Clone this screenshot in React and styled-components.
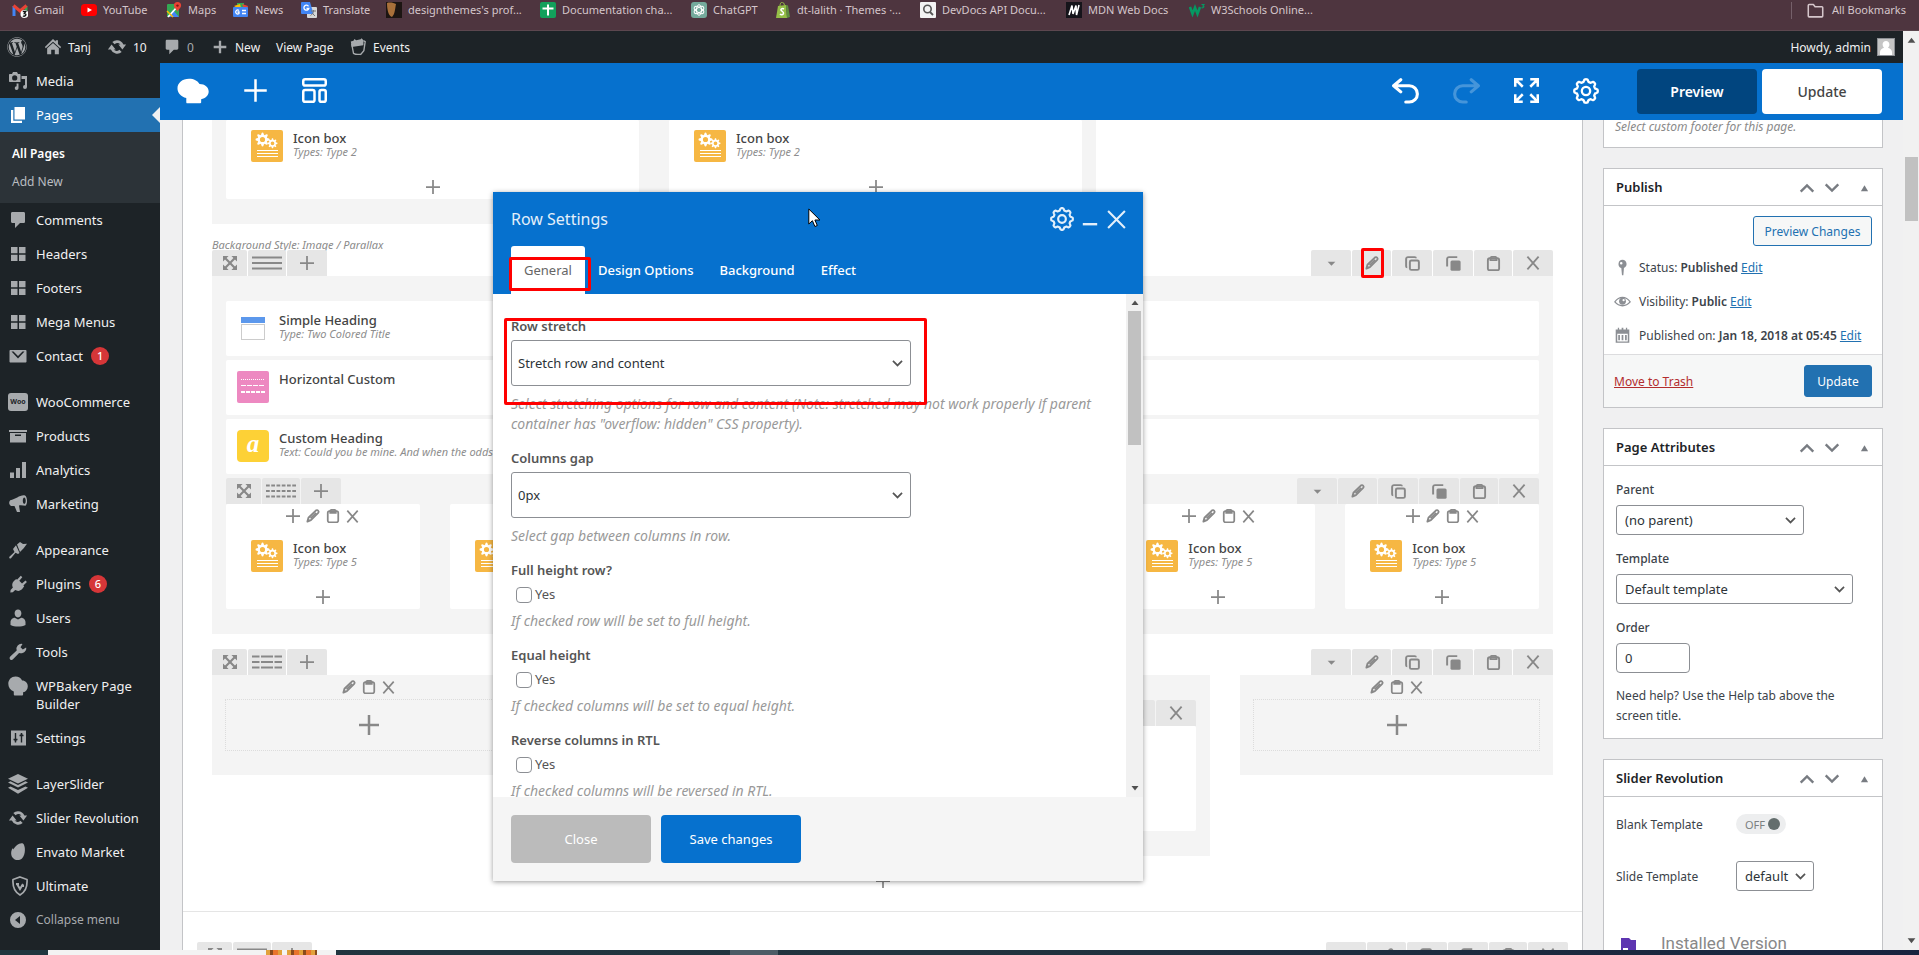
import React from 'react';
import styled, { createGlobalStyle, css } from 'styled-components';
import { FaWordpress } from 'react-icons/fa';

const blue = '#0671ce';
const wpBlue = '#2271b1';
const uiFont = '"Noto Sans", "Open Sans", sans-serif';

const GlobalStyle = createGlobalStyle`
  * { box-sizing: border-box; }
  body { margin: 0; font-family: ${uiFont}; font-size: 12px; color: #3c434a; overflow: hidden; }
  button, input, select { font: inherit; color: inherit; margin: 0; }
  button { border: 0; background: none; padding: 0; cursor: pointer; }
  a { color: inherit; text-decoration: none; }
  ul, p, h1, h2, h3 { margin: 0; padding: 0; font-weight: inherit; font-size: inherit; }
  ul { list-style: none; }
  svg { display: block; flex: none; }
`;

/* ---------- icons, drawn on a 20 unit grid ---------- */

const gearPath = (() => {
  const points = [];
  for (let i = 0; i < 96; i += 1) {
    const a = (i / 96) * Math.PI * 2;
    const r = 8.1 + 0.95 * Math.tanh(2.4 * Math.cos(8 * a));
    points.push(`${(10 + r * Math.sin(a)).toFixed(2)} ${(10 - r * Math.cos(a)).toFixed(2)}`);
  }
  return `M${points.join('L')}Z`;
})();

const cog = (cx, cy, r) => {
  const points = [];
  for (let i = 0; i < 64; i += 1) {
    const a = (i / 64) * Math.PI * 2;
    const q = r * (0.87 + 0.15 * Math.tanh(3 * Math.cos(8 * a)));
    points.push(`${(cx + q * Math.sin(a)).toFixed(2)} ${(cy - q * Math.cos(a)).toFixed(2)}`);
  }
  const h = r * 0.38;
  return `M${points.join('L')}ZM${cx - h} ${cy}a${h} ${h} 0 1 0 ${2 * h} 0a${h} ${h} 0 1 0 ${-2 * h} 0Z`;
};

const line = { fill: 'none', stroke: 'currentColor', strokeWidth: 2 };

const glyphs = {
  gear: <g {...line} strokeWidth="1.800"><path d={gearPath} strokeLinejoin="round" /><circle cx="10" cy="10" r="3.2" /></g>,
  plus: <path {...line} d="M10 1v18M1 10h18" />,
  add: <path {...line} strokeWidth="2.500" d="M10 0v20M0 10h20" />,
  close: <path {...line} d="M2 2l16 16M18 2L2 18" />,
  remove: <path {...line} strokeWidth="2.600" d="M2 1l16 18M18 1L2 19" />,
  minus: <path {...line} strokeWidth="3" d="M1 16.500h18" />,
  templates: <g {...line}><rect x="1" y="1" width="18" height="5" rx="1.500" /><rect x="1" y="9.500" width="9" height="9.500" rx="1.500" /><rect x="14" y="9.500" width="5" height="9.500" rx="1.500" /></g>,
  undo: <path {...line} strokeWidth="2.300" strokeLinecap="round" strokeLinejoin="round" d="M6.500 2L1.200 6.500l5.300 4.500M1.500 6.500h11.300a5.500 5.500 0 0 1 0 12h-2.600" />,
  redo: <path {...line} strokeWidth="2.300" strokeLinecap="round" strokeLinejoin="round" d="M13.500 2l5.300 4.500-5.300 4.500M18.500 6.500H7.200a5.500 5.500 0 0 0 0 12h2.600" />,
  fullscreen: <path {...line} d="M1 7V1h6M1 1l6 6M13 1h6v6M19 1l-6 6M1 13v6h6M1 19l6-6M19 13v6h-6M19 19l-6-6" />,
  bun: <path fill="currentColor" d="M7.500.5C3.400.5.3 3.700.3 7.800c0 3.700 2 6.300 5.500 7.600v3.200c0 .6.400.9.900.9h7.500c.6 0 .9-.4.900-.9v-2.300c2.700-.6 4.700-2.900 4.700-5.900 0-3.300-2.400-5.800-5.700-5.800C13 2 10.500.5 7.500.5z" />,
  move: <g fill="currentColor"><path d="M0 0h8L0 8zM20 0v8l-8-8zM0 20v-8l8 8zM20 20h-8l8-8z" /><path stroke="currentColor" strokeWidth="3" d="M3 3l14 14M17 3L3 17" /></g>,
  caret: <path fill="currentColor" d="M3 7h14l-7 7z" />,
  pencil: <g fill="none" stroke="currentColor" strokeWidth="2.600" strokeLinejoin="round"><path d="M2 18l1.500-5.500L14 2.200c1.200-1 3-.6 3.600.6.700 1 .500 2-.2 2.800L7 16z" /><path d="M6.500 13.500L14.500 5.500M3 15l2 2" /></g>,
  copy: <g {...line} strokeWidth="2.600"><rect x="6.500" y="6" width="12" height="12.500" rx="2" /><path d="M3 15c-1 0-1.500-.6-1.500-1.500V4A2.500 2.500 0 0 1 4 1.500h9c1 0 1.500.5 1.500 1.500" /></g>,
  clone: <g><rect x="6" y="6" width="13.500" height="13.500" rx="2" fill="currentColor" /><path {...line} strokeWidth="2.600" d="M1.500 14V4A2.500 2.500 0 0 1 4 1.500h11" /></g>,
  paste: <g {...line} strokeWidth="2.500"><rect x="2.500" y="3" width="15" height="16" rx="2.500" /><path d="M6 3.200C6 1.800 7 1.200 8 1.200h4c1 0 2 .6 2 2V5.500H6z" /></g>,
  rows1: <path {...line} strokeWidth="1.800" d="M0 4.500h20M0 10h20M0 15.500h20" />,
  rows3: <path {...line} strokeWidth="1.800" strokeDasharray="5 1 8 1 5 9" d="M0 4.500h20M0 10h20M0 15.500h20" />,
  rows6: <path {...line} strokeWidth="1.800" strokeDasharray="2.500 1" d="M0 4.500h20M0 10h20M0 15.500h20" />,
  chevronUp: <path {...line} strokeWidth="2.600" d="M3 14l7-7 7 7" />,
  chevronDown: <path {...line} strokeWidth="2.600" d="M3 6l7 7 7-7" />,
  triangle: <path fill="currentColor" d="M10 3l8 13H2z" />,
  scrollUp: <path fill="currentColor" d="M10 5l7 9H3z" />,
  scrollDown: <path fill="currentColor" d="M3 6h14l-7 9z" />,
  folder: <path {...line} strokeWidth="1.800" strokeLinejoin="round" d="M1.500 16.500V4c0-.6.400-1 1-1h5l2 2.500h8c.6 0 1 .4 1 1v10c0 .6-.4 1-1 1h-15c-.6 0-1-.4-1-1z" />,
  home: <path fill="currentColor" d="M10 1l3 3V2.500h2.500V6.600L19 10l-1 1.300L10 4.200 2 11.300 1 10zM10 5.600l6.500 5.700V18H12v-5H8v5H3.500v-6.700z" />,
  update: <path fill="currentColor" d="M10.200 3.300c2.800 0 5.200 1.600 6.200 4.200h2.700L15.400 12.500l-4-5h2A4.200 4.200 0 0 0 7.600 7.300L5.300 5a7 7 0 0 1 4.900-1.700zM4.600 7.500l4 5h-2a4.200 4.200 0 0 0 5.800.2l2.300 2.300a7 7 0 0 1-10.900-2.500H.900z" />,
  comment: <path fill="currentColor" d="M4.500 2h11c1 0 1.500.6 1.500 1.500v8c0 1-.6 1.500-1.500 1.500H12l-5 5v-5H4.500c-1 0-1.500-.6-1.500-1.500v-8c0-1 .6-1.500 1.500-1.500z" />,
  thickPlus: <path fill="currentColor" d="M17 8.700v2.600h-5.700V17H8.700v-5.700H3V8.700h5.700V3h2.600v5.700z" />,
  ticket: <g><path fill="none" stroke="currentColor" strokeWidth="1.500" d="M3 6.500L5 17c4 2.300 6 .6 8 1.300L16.500 14 18 4 16 3" /><path fill="currentColor" d="M2 4l3-1 1-2 2 1.500 5-1L14 .3l2 2.200L16 8 3 10z" /></g>,
  media: <g fill="currentColor"><path fillRule="evenodd" d="M2 3h2l1-2h4l1 2h1.500c.6 0 1 .4 1 1v7H2c-.6 0-1-.4-1-1V4c0-.6.400-1 1-1zm4.700 1.300a2.600 2.600 0 1 0 0 5.200 2.600 2.600 0 0 0 0-5.200z" /><path d="M13.500 5H19v11a2 2 0 1 1-2-2V8h-3.500zM10.500 12.500v4.700a1.900 1.900 0 1 1-1.900-2v-2.700z" /></g>,
  pages: <path fill="currentColor" d="M6.500 2H17v12.500H6.500zM3 5h2.300v10.700H14V18H3z" />,
  blocks: <path fill="currentColor" d="M3 3h6.500v6.300H3zM11 3h6.500v6.300H11zM3 10.700h6.500V17H3zM11 10.700h6.500V17H11z" />,
  mail: <path fill="currentColor" fillRule="evenodd" d="M2.500 4h15c.5 0 1 .4 1 1v10.500c0 .6-.5 1-1 1h-15c-.5 0-1-.4-1-1V5c0-.6.500-1 1-1zm1 1.500l6.500 7 6.500-7h-2L10 10 5.500 5.500z" />,
  archive: <path fill="currentColor" fillRule="evenodd" d="M1 4h18v2H1zM2 7h16v9.500H2zm5 1.500V10h6V8.500z" />,
  chart: <path fill="currentColor" d="M2 12.500h4V18H2zM8 8h4v10H8zM14 2h4v16h-4z" />,
  megaphone: <path fill="currentColor" fillRule="evenodd" d="M17 1.500c2.500 1.300 2.800 8.500.5 10.300-2.500-.3-4.500-.8-6.500-.3l1 6.500H9l-2.500-6H3c-2-1-2.500-4-.8-5.800C8 5.500 12 .500 17 1.500zm-.6 2c-2 .3-2.200 5.500-.2 6.500 2-.3 2-5.800.2-6.500z" />,
  brush: <path fill="currentColor" d="M9 4.500L12 2l3 2 4-.3-3.300 4.500L12 12zM8 5.300L11.500 13 10 14l-2.500-1.200L3 18.300c-1 .700-2.300-.5-1.600-1.600L6.500 12 5 9z" />,
  plug: <path fill="currentColor" d="M12.800 1.800l1.500 1.500-3 3.500 2.700 2.700 3.500-3 1.400 1.400-3.500 3.500.8.900-2 2.800c-1.800 2-4.700 2.300-7 1l-2.400 2.100-2.500.2.300-2.500 2.300-2.300c-1.200-2.300-.8-5 1-6.700l2.300-2 .8.800z" />,
  user: <path fill="currentColor" d="M10 1.500c2 0 3.400 1.600 3.400 3.800S12 9.500 10 9.500 6.600 7.500 6.600 5.300 8 1.500 10 1.500zM2.500 14c0-2 2-4.200 4.200-4.200L10 11.500l3.300-1.700c2.200 0 4.200 2.200 4.200 4.200v3c-4 2-11 2-15 0z" />,
  wrench: <path fill="currentColor" d="M16.700 9.800c-1.500 1.500-3.700 1.900-5.600 1.100L5 17.300c-.8.900-2 .9-2.800.1s-.8-2 .1-2.800l6.400-6.100A5 5 0 0 1 14.500 2l-2 3.200 2.300 2.300 3.300-2c.5 1.500 0 3.200-1.400 4.300z" />,
  sliders: <g><rect x="3" y="2.500" width="15" height="15" fill="currentColor" /><path d="M7.500 5v9.500M13.500 5v9.500M5.500 11.500h4M11.500 7.500h4M6.500 12.500h2M12.500 6.500h2" stroke="#1d2327" strokeWidth="1.400" /></g>,
  layers: <path fill="currentColor" d="M10 0l10 4.800L10 9.600 0 4.800zM0 8.500l2.500-1.200L10 11l7.500-3.700L20 8.500l-10 5zM0 13.700l2.500-1.200L10 16.100l7.500-3.600 2.500 1.200-10 6z" />,
  leaf: <path fill="currentColor" d="M15 1.500c2.500 2 3 11-1 15-3 2.500-7.500 2-9.500-1C2.500 13 3 8.500 4.500 6.500c.7-.3 1 .2.600 1.300C8 3 11 .8 15 1.500z" />,
  shield: <g {...line} strokeWidth="1.700"><path d="M12 1l7 2.500c.5 7-1.500 12.500-7 15.500-5.500-3-7.500-8.500-7-15.500z" /><path strokeWidth="2" d="M9 8l3 5 3-5M8 8h3M13 10h3" /></g>,
  collapse: <path fill="currentColor" fillRule="evenodd" d="M10 2a8 8 0 1 1 0 16 8 8 0 0 1 0-16zm2 4l-5 4 5 4z" />,
  pin: <path fill="currentColor" d="M10 1a5 5 0 0 1 1.700 9.600L11 19H9.400l-.8-8.300A5 5 0 0 1 10 1zM8.500 3.500A1.500 1.500 0 1 0 8.500 6.500 1.500 1.500 0 0 0 8.500 3.500z" fillRule="evenodd" />,
  eye: <g><path {...line} strokeWidth="1.500" d="M1 10.500c5-7 13-7 18 0-5 6-13 6-18 0z" /><circle cx="10" cy="9.700" r="4" fill="currentColor" /><circle cx="11.300" cy="8.400" r="1.300" fill="#fff" /></g>,
  calendar: <path fill="currentColor" fillRule="evenodd" d="M3 3h1.500V1H6v2h3V1h2v2h3V1h1.500v2H18v15.500H2V3zm.8 5v9h12.400V8zM5 9.500h2v6H5zm4 0h2v6H9zm4 0h2v6h-2z" />,
};

function Icon({ name, size = 20, width }) {
  return (
    <svg width={width || size} height={size} viewBox="0 0 20 20" preserveAspectRatio={width ? 'none' : undefined} aria-hidden="true">
      {glyphs[name]}
    </svg>
  );
}

const favicons = {
  gmail: <g fill="none" strokeWidth="3"><path stroke="#4285f4" d="M2 14V4" /><path stroke="#34a853" d="M14 9V4" /><path stroke="#ea4335" d="M1.500 3.500L8 9l6.500-5.500" /><circle cx="12.500" cy="12" r="4" fill="#fff" stroke="none" /><path stroke="#111" strokeWidth="1.300" d="M10.800 9.500h3l-1.500 2c3 0 1.500 3.500-1.500 2.500" /></g>,
  youtube: <g><rect y="2" width="16" height="12" rx="3.500" fill="#f00" /><path fill="#fff" d="M6.500 5.500L11 8l-4.500 2.500z" /></g>,
  maps: <g><rect x="1" y="2" width="12" height="13" rx="1" fill="#34a853" /><path fill="#4285f4" d="M7 8l6 7H2z" /><path stroke="#fff" strokeWidth="1.800" d="M2 15L12 4" /><path stroke="#fbbc04" strokeWidth="1.500" d="M1 9l6 6" /><path fill="#ea4335" d="M11.500 0a3.600 3.600 0 0 1 3.600 3.600c0 2.500-2.600 3.400-3.600 6.400-1-3-3.600-3.900-3.600-6.400A3.600 3.600 0 0 1 11.500 0z" /><circle cx="11.500" cy="3.600" r="1.200" fill="#7b1b13" /></g>,
  news: <g><path fill="#34a853" d="M4 1h7v8H4z" /><path fill="#ea4335" d="M9 2l6 2-2 7z" /><path fill="#fbbc04" d="M1 4l6-2 2 7z" /><rect y="5" width="15" height="10" rx="1" fill="#4285f4" /><path fill="none" stroke="#fff" strokeWidth="1.300" d="M6 8.500a2 2 0 1 0 0 3V10H4.500M9 8.500h4M9 11.500h4" /></g>,
  translate: <g><rect x="6" y="5" width="10" height="11" rx="1" fill="#d6d6d6" /><path fill="#4285f4" d="M1 0h8l3.500 12H1a1 1 0 0 1-1-1V1a1 1 0 0 1 1-1z" /><path fill="none" stroke="#fff" strokeWidth="1.300" d="M7.500 4.300a2.500 2.500 0 1 0 .3 2.200H5.500" /><path stroke="#777" d="M10 9h5M12.500 8v1c0 2-2 4-3 4.500M11 11l3 3" fill="none" /></g>,
  wood: <g><rect width="16" height="16" fill="#1c1512" /><path fill="#a8703a" d="M1 1c3-1 7 0 9 1-1 5-1 10-4 13-4-1-5-9-5-14z" /></g>,
  sheet: <g><rect width="16" height="16" rx="2" fill="#12a05b" /><path stroke="#fff" strokeWidth="2" d="M8 2.500v11M2.500 6.500h11" /></g>,
  gpt: <g><rect width="16" height="16" rx="3" fill="#74aa9c" /><g fill="none" stroke="#fff" strokeWidth="1"><ellipse cx="8" cy="8" rx="2.500" ry="5.300" /><ellipse cx="8" cy="8" rx="2.500" ry="5.300" transform="rotate(60 8 8)" /><ellipse cx="8" cy="8" rx="2.500" ry="5.300" transform="rotate(120 8 8)" /></g></g>,
  shopify: <g><path fill="#95bf47" d="M3 4l8-1 1 13H1z" /><path fill="#5e8e3e" d="M11 3l2 .5 2 11.500-3 1z" /><path fill="none" stroke="#95bf47" d="M5 4c0-5 4-5 4.500-.5" /><path fill="none" stroke="#fff" strokeWidth="1.500" d="M9 7c-2-1-3.500.2-3 1.200S9 10 8.500 11.500 6 13 5 12" /></g>,
  search: <g><rect width="16" height="16" rx="1" fill="#f3f3f3" /><circle cx="7.500" cy="7" r="3.700" fill="none" stroke="#555" strokeWidth="1.600" /><path stroke="#555" strokeWidth="1.800" d="M10 10l3 3" /></g>,
  mdn: <g><rect width="16" height="16" fill="#15141a" /><path fill="none" stroke="#fff" strokeWidth="1.600" d="M3 13L6 3.500 7 12l3-8.500.5 9.500L13 3" /></g>,
  w3: <g fill="none" stroke="#059862"><path strokeWidth="2.500" d="M1 5l2.500 7L6 5.500 8.500 12 11 5" /><path strokeWidth="1.200" d="M12.500 2.500h2.500l-1 1.500c1.500 0 1 2.300-1.500 1.700" /></g>,
};

/* ---------- browser bookmarks ---------- */

const Screen = styled.div`
  display: flex;
  flex-direction: column;
  height: 100vh;
  min-width: 1200px;
  overflow: hidden;
`;

const BookmarkBar = styled.nav`
  display: flex;
  align-items: center;
  flex: none;
  height: 31px;
  padding: 0 13px 10px 12px;
  background: #4e353f;
  border-bottom: 1px solid #5c474f;
  color: #d5c6cb;
  font-size: 11px;
`;

const Bookmark = styled.a`
  display: flex;
  align-items: center;
  gap: 6px;
  width: ${(p) => p.$width}px;
  line-height: 18px;
  white-space: nowrap;
`;

const AllBookmarks = styled.a`
  display: flex;
  align-items: center;
  gap: 8px;
  margin-left: auto;
  padding-left: 15px;
  border-left: 1px solid #75606a;
  line-height: 16px;
`;

const bookmarks = [
  ['gmail', 'Gmail', 69], ['youtube', 'YouTube', 85], ['maps', 'Maps', 67], ['news', 'News', 68],
  ['translate', 'Translate', 85], ['wood', "designthemes's prof...", 154], ['sheet', 'Documentation cha...', 151],
  ['gpt', 'ChatGPT', 84], ['shopify', 'dt-lalith · Themes ·...', 145], ['search', 'DevDocs API Docu...', 146],
  ['mdn', 'MDN Web Docs', 123], ['w3', 'W3Schools Online...', 128],
];

/* ---------- WordPress admin bar ---------- */

const Window = styled.div`
  display: flex;
  flex: 1;
  min-height: 0;
`;

const Page = styled.div`
  display: flex;
  flex-direction: column;
  flex: 1;
  min-width: 0;
`;

const AdminBar = styled.header`
  display: flex;
  align-items: center;
  flex: none;
  height: 32px;
  padding: 0 8px 0 4px;
  background: #1d2327;
  color: #f0f0f1;
  font-size: 12px;
`;

const AdminItem = styled.a`
  display: flex;
  align-items: center;
  gap: 6px;
  width: ${(p) => p.$width}px;
  padding-left: 3px;
  white-space: nowrap;
  color: ${(p) => (p.$dim ? '#a7aaad' : 'inherit')};
  svg { color: #a7aaad; }
`;

const Account = styled.a`
  display: flex;
  align-items: center;
  gap: 6px;
  margin-left: auto;
`;

/* ---------- left menu ---------- */

const Columns = styled.div`
  display: flex;
  flex: 1;
  min-height: 0;
`;

const Menu = styled.nav`
  flex: none;
  width: 160px;
  padding-top: 1px;
  background: #1d2327;
  color: #f0f0f1;
  overflow: hidden;
`;

const MenuItem = styled.a`
  position: relative;
  display: flex;
  align-items: flex-start;
  gap: 8px;
  min-height: 34px;
  padding: 8px;
  font-size: ${(p) => (p.$dim ? 12 : 13)}px;
  line-height: 18px;
  color: ${(p) => (p.$dim ? '#a7aaad' : 'inherit')};
  svg { color: #a7aaad; margin-top: -1px; margin-bottom: -1px; }
  ${(p) => p.$active && css`
    background: ${wpBlue};
    color: #fff;
    svg { color: #fff; }
    &::after {
      content: '';
      position: absolute;
      right: 0;
      top: 9px;
      border: 8px solid transparent;
      border-right-color: #f0f0f1;
      border-left: 0;
    }
  `}
`;

const MenuGap = styled.div`
  height: 12px;
`;

const SubMenu = styled.div`
  display: flex;
  flex-direction: column;
  padding: 8px 12px 7px;
  background: #2c3338;
  line-height: 28px;
`;

const SubLink = styled.a`
  color: ${(p) => (p.$current ? '#fff' : '#b9bdc1')};
  font-weight: ${(p) => (p.$current ? 600 : 400)};
`;

const Count = styled.span`
  width: 18px;
  height: 18px;
  border-radius: 9px;
  background: #d63638;
  color: #fff;
  font-size: 11px;
  font-weight: 500;
  text-align: center;
`;

const WooBadge = styled.span`
  width: 20px;
  height: 18px;
  border-radius: 3px;
  background: #a7aaad;
  color: #1d2327;
  font-size: 7px;
  font-weight: 700;
  line-height: 18px;
  text-align: center;
`;

/* ---------- builder toolbar ---------- */

const Main = styled.main`
  position: relative;
  display: flex;
  flex-direction: column;
  flex: 1;
  min-width: 0;
  background: #f0f0f1;
`;

const Toolbar = styled.div`
  display: flex;
  align-items: center;
  justify-content: space-between;
  flex: none;
  height: 57px;
  padding: 0 21px 2px 17px;
  background: ${blue};
  color: #fff;
`;

const ToolGroup = styled.div`
  display: flex;
  align-items: center;
  gap: 34px;
`;

const ToolButton = styled.button`
  display: block;
  opacity: ${(p) => (p.disabled ? 0.25 : 1)};
`;

const Actions = styled.div`
  display: flex;
  gap: 5px;
  margin: 2px 0 0 4px;
`;

const ActionButton = styled.button`
  width: 120px;
  height: 45px;
  border-radius: 4px;
  background: ${(p) => (p.$dark ? '#01457f' : '#fff')};
  color: ${(p) => (p.$dark ? '#fff' : '#444')};
  font-size: 14px;
  font-weight: ${(p) => (p.$dark ? 600 : 500)};
`;

/* ---------- editor ---------- */

const Workspace = styled.div`
  display: flex;
  gap: 20px;
  flex: 1;
  min-height: 0;
  padding: 0 20px 0 22px;
  overflow: hidden;
`;

const Editor = styled.section`
  flex: 1;
  min-width: 0;
  border: solid #c3c4c7;
  border-width: 0 1px;
  background: #fff;
  color: #444;
`;

const Rows = styled.div`
  padding: 0 29px 18px;
`;

const NextRows = styled.div`
  padding: 30px 14px 0;
  border-top: 1px solid #e5e5e5;
`;

const RowNote = styled.p`
  height: 14px;
  margin-top: 12px;
  color: #8a8a8a;
  font-size: 11px;
  font-style: italic;
  line-height: 18px;
`;

const Controls = styled.div`
  display: flex;
  gap: 1px;
  height: 26px;
  margin-top: ${(p) => p.$top || 0}px;
`;

const Control = styled.button`
  position: relative;
  display: flex;
  align-items: center;
  justify-content: center;
  width: ${(p) => p.$width || 40}px;
  margin-left: ${(p) => (p.$push ? 'auto' : 0)};
  border-radius: 2px 2px 0 0;
  background: #e6e6e6;
  color: #888;
`;

const Shade = styled.div`
  padding: ${(p) => p.$pad || '25px 14px'};
  background: #f4f4f4;
`;

const Grid = styled.div`
  display: grid;
  grid-template-columns: ${(p) => p.$columns};
  gap: 30px;
  align-items: start;
`;

const Stack = styled.div`
  display: flex;
  flex-direction: column;
  gap: 4px;
`;

const Card = styled.div`
  padding: ${(p) => p.$pad};
  border-radius: 2px;
  background: #fff;
`;

const ElementBox = styled.div`
  display: flex;
  gap: 10px;
  height: 32px;
  white-space: nowrap;
`;

const ElementTitle = styled.h3`
  color: #444;
  font-size: 13px;
  font-weight: 500;
  line-height: 17px;
`;

const ElementInfo = styled.p`
  color: #8d8d8d;
  font-size: 11px;
  font-style: italic;
  line-height: 9px;
`;

const AddButton = styled.button`
  display: block;
  width: 32px;
  height: 24px;
  margin: 13px auto 0;
  color: #888;
  svg { margin: 0 auto; }
`;

const CardTools = styled.div`
  display: flex;
  align-items: center;
  justify-content: center;
  gap: 6px;
  height: 24px;
  color: #888;
`;

const DropZone = styled.button`
  display: flex;
  align-items: center;
  justify-content: center;
  width: 100%;
  height: 52px;
  border: 1px dotted #dcdcdc;
  color: #888;
`;

const Highlight = styled.span`
  position: absolute;
  inset: ${(p) => p.$inset};
  border: 3px solid #f00;
  border-radius: 2px;
  pointer-events: none;
`;

const IconBoxArt = () => (
  <svg width="32" height="32" viewBox="0 0 32 32" aria-hidden="true">
    <rect width="32" height="32" rx="2" fill="#f6b743" />
    <path fill="#fff" fillRule="evenodd" d={cog(11.5, 9.5, 6.8)} />
    <path fill="#fff" fillRule="evenodd" d={cog(21.5, 13.3, 4.9)} />
    <path stroke="#fff" strokeWidth="1.200" d="M6 20.500h21M6 23.500h21M6 26.500h21" />
  </svg>
);
const HeadingArt = () => (
  <svg width="32" height="32" viewBox="0 0 32 32" aria-hidden="true">
    <path fill="#5c98ec" d="M4 5h24v6H4z" />
    <path fill="none" stroke="#999" strokeDasharray="1 1" d="M4.500 12.500h23v15h-23z" />
  </svg>
);
const DividerArt = () => (
  <svg width="32" height="32" viewBox="0 0 32 32" aria-hidden="true">
    <rect width="32" height="32" rx="2" fill="#ed89c1" />
    <g stroke="#fff"><path strokeDasharray="1 1" d="M4 8.500h24" /><path strokeDasharray="5 1" d="M4 14.500h24" /><path strokeWidth="2" strokeDasharray="4 1" d="M4 21h24" /></g>
  </svg>
);
const LetterTile = styled.span`
  width: 32px;
  height: 32px;
  border-radius: 4px;
  background: #fdd136;
  color: #fff;
  font: italic 700 25px/28px "Liberation Serif", serif;
  text-align: center;
`;

function Element({ art, title, info }) {
  return (
    <ElementBox>
      {art}
      <div>
        <ElementTitle>{title}</ElementTitle>
        {info && <ElementInfo>{info}</ElementInfo>}
      </div>
    </ElementBox>
  );
}

function RowControls({ layout, top, highlighted }) {
  return (
    <Controls $top={top}>
      <Control $width={35} aria-label="Move row"><Icon name="move" size={14} /></Control>
      <Control $width={38} aria-label="Row layout"><Icon name={layout} size={20} width={30} /></Control>
      <Control aria-label="Add column"><Icon name="add" size={14} /></Control>
      <Control $push aria-label="Toggle row"><Icon name="caret" size={11} /></Control>
      <Control $width={39} aria-label="Edit row">
        <Icon name="pencil" size={14} />
        {highlighted && <Highlight $inset="-2px 7px -2px 9px" />}
      </Control>
      <Control aria-label="Copy row"><Icon name="copy" size={15} /></Control>
      <Control aria-label="Clone row"><Icon name="clone" size={15} /></Control>
      <Control $width={38} aria-label="Paste row"><Icon name="paste" size={15} /></Control>
      <Control aria-label="Delete row"><Icon name="remove" size={14} /></Control>
    </Controls>
  );
}

function ColumnTools({ withAdd }) {
  return (
    <CardTools>
      {withAdd && <button type="button" aria-label="Add"><Icon name="add" size={14} /></button>}
      <button type="button" aria-label="Edit"><Icon name="pencil" size={14} /></button>
      <button type="button" aria-label="Paste"><Icon name="paste" size={14} /></button>
      <button type="button" aria-label="Delete"><Icon name="remove" size={13} /></button>
    </CardTools>
  );
}

function IconBoxCard({ type, tools }) {
  return (
    <Card $pad="0">
      {tools && <ColumnTools withAdd />}
      <Card $pad={tools ? '12px 25px 0' : '10px 25px 0'}>
        <Element art={<IconBoxArt />} title="Icon box" info={`Types: Type ${type}`} />
      </Card>
      <AddButton aria-label="Add element"><Icon name="add" size={14} /></AddButton>
    </Card>
  );
}

function EmptyColumn() {
  return (
    <Shade $pad="0 13px 24px">
      <ColumnTools />
      <DropZone aria-label="Add element"><Icon name="add" size={20} /></DropZone>
    </Shade>
  );
}

/* ---------- meta boxes ---------- */

const Aside = styled.aside`
  flex: none;
  display: flex;
  flex-direction: column;
  gap: 20px;
  width: 280px;
`;

const MetaBox = styled.section`
  border: 1px solid #c3c4c7;
  background: #fff;
  ${(p) => p.$cut && css`
    border-top: 0;
    padding: 1px 11px 14px;
    color: #8a8a8a;
    font-style: italic;
    line-height: 12px;
  `}
`;

const MetaHead = styled.header`
  display: flex;
  align-items: center;
  height: 37px;
  padding: 0 12px;
  border-bottom: 1px solid #c3c4c7;
  color: #787c82;
`;

const MetaTitle = styled.h2`
  flex: 1;
  color: #1d2327;
  font-size: 13px;
  font-weight: 600;
`;

const MetaArrow = styled.button`
  display: flex;
  justify-content: center;
  width: ${(p) => (p.$last ? 24 : 25)}px;
  margin-left: ${(p) => (p.$last ? 8 : 0)}px;
  margin-right: ${(p) => (p.$last ? -6 : 0)}px;
  padding-top: 2px;
`;

const MetaBody = styled.div`
  padding: ${(p) => p.$pad};
`;

const Button = styled.button`
  display: block;
  margin-left: auto;
  width: ${(p) => (p.$primary ? 68 : 119)}px;
  height: ${(p) => (p.$primary ? 32 : 30)}px;
  border: 1px solid ${wpBlue};
  border-radius: 3px;
  background: ${(p) => (p.$primary ? wpBlue : '#f6f7f7')};
  color: ${(p) => (p.$primary ? '#fff' : wpBlue)};
  white-space: nowrap;
`;

const StatusRow = styled.div`
  display: flex;
  align-items: center;
  gap: 8px;
  height: 34px;
  white-space: nowrap;
  svg { color: #8c8f94; }
`;

const Strong = styled.b`
  font-weight: 600;
`;

const Link = styled.a`
  color: ${(p) => (p.$danger ? '#b32d2e' : wpBlue)};
  text-decoration: underline;
`;

const PublishFoot = styled.footer`
  display: flex;
  align-items: center;
  height: 53px;
  padding: 0 10px;
  border-top: 1px solid #dcdcde;
  background: #f6f7f7;
`;

const Form = styled.div`
  display: flex;
  flex-direction: column;
  gap: 13px;
  padding: 13px 12px 12px;
  line-height: 20px;
`;

const Field = styled.div`
  display: flex;
  flex-direction: column;
  gap: 4px;
`;

const FieldLabel = styled.label`
  font-weight: 500;
  line-height: 22px;
`;

const SelectWrap = styled.div`
  position: relative;
  width: ${(p) => p.$width}px;
  max-width: 100%;
  color: #2c3338;
  svg {
    position: absolute;
    right: 7px;
    top: 50%;
    margin-top: -6px;
    color: #555;
    pointer-events: none;
  }
`;

const SelectBox = styled.select`
  display: block;
  width: 100%;
  height: ${(p) => (p.$tall ? 46 : 30)}px;
  padding: 0 20px 0 ${(p) => (p.$tall ? 6 : 8)}px;
  border: 1px solid #8c8f94;
  border-radius: 3px;
  background: #fff;
  font-size: 13px;
  appearance: none;
`;

const TextInput = styled.input`
  width: 74px;
  height: 30px;
  padding: 0 8px;
  border: 1px solid #8c8f94;
  border-radius: 4px;
  color: #2c3338;
  font-size: 13px;
`;

const SliderRow = styled.div`
  display: grid;
  grid-template-columns: 120px 1fr;
  align-items: center;
  height: 52px;
`;

const Switch = styled.label`
  display: flex;
  align-items: center;
  justify-content: flex-end;
  gap: 3px;
  width: 50px;
  height: 20px;
  padding-right: 6px;
  border-radius: 10px;
  background: #edeeef;
  color: #7c8081;
  font-size: 11px;
`;

const SwitchKnob = styled.input`
  width: 12px;
  height: 12px;
  border-radius: 6px;
  background: #646e6d;
  appearance: none;
`;

const Version = styled.div`
  display: flex;
  align-items: flex-start;
  gap: 25px;
  padding: 27px 5px 0;
  color: #888;
  font: 17px/28px Roboto, sans-serif;
  svg { margin-top: 9px; }
`;

function Select({ id, label, value, width, tall }) {
  return (
    <SelectWrap $width={width}>
      <SelectBox id={id} aria-label={label} $tall={tall} defaultValue={value}><option>{value}</option></SelectBox>
      <Icon name="chevronDown" size={13} />
    </SelectWrap>
  );
}

function MetaHeader({ title }) {
  return (
    <MetaHead>
      <MetaTitle>{title}</MetaTitle>
      <MetaArrow aria-label="Move up"><Icon name="chevronUp" size={18} /></MetaArrow>
      <MetaArrow aria-label="Move down"><Icon name="chevronDown" size={18} /></MetaArrow>
      <MetaArrow $last aria-label="Toggle panel"><Icon name="triangle" size={9} /></MetaArrow>
    </MetaHead>
  );
}

/* ---------- row settings window ---------- */

const Dialog = styled.section`
  position: absolute;
  left: 333px;
  top: 129px;
  width: 650px;
  background: #fff;
  box-shadow: 0 1px 5px rgba(0, 0, 0, 0.4);
  color: #555;
  font-size: 13px;
`;

const DialogHead = styled.header`
  position: relative;
  padding: 0 16px 0 18px;
  background: ${blue};
  color: #e3effa;
`;

const TitleRow = styled.div`
  display: flex;
  align-items: center;
  gap: 8px;
  height: 54px;
`;

const DialogTitle = styled.h2`
  flex: 1;
  font-size: 16px;
`;

const Tabs = styled.div`
  display: flex;
  height: 48px;
`;

const Tab = styled.button`
  position: relative;
  padding: 0 13px;
  border-radius: 3px 3px 0 0;
  background: ${(p) => (p.$active ? '#fff' : 'none')};
  color: ${(p) => (p.$active ? '#666' : '#fff')};
  font-weight: ${(p) => (p.$active ? 400 : 500)};
`;

const Cursor = styled.svg`
  position: absolute;
  left: 315px;
  top: 16px;
`;

const DialogBody = styled.div`
  display: flex;
  height: 503px;
`;

const Settings = styled.div`
  flex: 1;
  display: flex;
  flex-direction: column;
  gap: 14px;
  padding: 22px 28px 0 18px;
  overflow: hidden;
`;

const Setting = styled.div`
  position: relative;
  line-height: 20px;
`;

const SettingLabel = styled.label`
  display: block;
  margin-bottom: 4px;
  font-weight: 600;
`;

const SettingTitle = styled.div`
  font-weight: 600;
`;

const Help = styled.p`
  padding-top: 8px;
  color: #999;
  font-size: 14px;
  font-style: italic;
`;

const Tick = styled.label`
  display: flex;
  align-items: flex-start;
  gap: 3px;
  height: 16px;
  margin: 7px 0 0 5px;
  line-height: 14px;
`;

const TickBox = styled.input`
  width: 16px;
  height: 16px;
  border: 1px solid #8c8f94;
  border-radius: 4px;
  background: #fff;
  appearance: none;
`;

const DialogFoot = styled.footer`
  display: flex;
  gap: 10px;
  padding: 18px;
  background: #f5f5f5;
`;

const FootButton = styled.button`
  width: 140px;
  height: 48px;
  border-radius: 4px;
  background: ${(p) => (p.$primary ? blue : '#bbb')};
  color: #fff;
`;

const Scrollbar = styled.div`
  display: flex;
  flex-direction: column;
  align-items: center;
  flex: none;
  width: ${(p) => p.$width}px;
  padding: 4px 0;
  background: #f1f1f1;
  color: #505050;
`;

const Thumb = styled.div`
  width: 13px;
  height: ${(p) => p.$height}px;
  margin: ${(p) => p.$top}px 0 auto;
  background: #c1c1c1;
`;

const ticks = [
  ['Full height row?', 'If checked row will be set to full height.'],
  ['Equal height', 'If checked columns will be set to equal height.'],
  ['Reverse columns in RTL', 'If checked columns will be reversed in RTL.'],
];

function RowSettings() {
  return (
    <Dialog role="dialog" aria-label="Row Settings">
      <DialogHead>
        <TitleRow>
          <DialogTitle>Row Settings</DialogTitle>
          <button type="button" aria-label="Settings"><Icon name="gear" size={24} /></button>
          <button type="button" aria-label="Minimize"><Icon name="minus" size={16} /></button>
          <button type="button" aria-label="Close"><Icon name="close" size={21} /></button>
        </TitleRow>
        <Tabs>
          <Tab $active>General<Highlight $inset="11px -6px 3px -2px" /></Tab>
          <Tab>Design Options</Tab>
          <Tab>Background</Tab>
          <Tab>Effect</Tab>
        </Tabs>
        <Cursor width="13" height="20" viewBox="0 0 13 20">
          <path d="M.8 1v15l3.600-3.300L6.900 18.500l2.400-1L6.900 12h5z" fill="#fff" stroke="#000" />
        </Cursor>
      </DialogHead>
      <DialogBody>
        <Settings>
          <Setting>
            <SettingLabel htmlFor="stretch">Row stretch</SettingLabel>
            <Select id="stretch" value="Stretch row and content" width={400} tall />
            <Help>Select stretching options for row and content (Note: stretched may not work properly if parent container has &quot;overflow: hidden&quot; CSS property).</Help>
            <Highlight $inset="2px 171px 29px -7px" />
          </Setting>
          <Setting>
            <SettingLabel htmlFor="gap">Columns gap</SettingLabel>
            <Select id="gap" value="0px" width={400} tall />
            <Help>Select gap between columns in row.</Help>
          </Setting>
          {ticks.map(([title, help]) => (
            <Setting key={title}>
              <SettingTitle>{title}</SettingTitle>
              <Tick><TickBox type="checkbox" aria-label={title} />Yes</Tick>
              <Help>{help}</Help>
            </Setting>
          ))}
        </Settings>
        <Scrollbar $width={17}>
          <Icon name="scrollUp" size={10} />
          <Thumb $top={3} $height={134} />
          <Icon name="scrollDown" size={10} />
        </Scrollbar>
      </DialogBody>
      <DialogFoot>
        <FootButton>Close</FootButton>
        <FootButton $primary>Save changes</FootButton>
      </DialogFoot>
    </Dialog>
  );
}

/* ---------- taskbar ---------- */

const Taskbar = styled.footer`
  display: flex;
  flex: none;
  height: 5px;
  padding-left: 48px;
  background: linear-gradient(90deg, #20363f, #22343f 50%, #18233f);
`;

const TaskSearch = styled.div`
  display: flex;
  gap: 5px;
  width: 288px;
  padding-left: 218px;
  background: #f3f3f3;
`;

const TaskArt = styled.span`
  width: ${(p) => p.$width}px;
  background: repeating-linear-gradient(90deg, #e2a13c 0 4px, #8a4b1c 4px 7px, #e9742b 7px 12px);
`;

const TaskActive = styled.div`
  width: 48px;
  margin-left: 394px;
  background: #4c5c66;
`;

/* ---------- page ---------- */

const menuItems = [
  ['comment', 'Comments'], ['blocks', 'Headers'], ['blocks', 'Footers'], ['blocks', 'Mega Menus'], ['mail', 'Contact', 1], null,
  ['woo', 'WooCommerce'], ['archive', 'Products'], ['chart', 'Analytics'], ['megaphone', 'Marketing'], null,
  ['brush', 'Appearance'], ['plug', 'Plugins', 6], ['user', 'Users'], ['wrench', 'Tools'],
  ['bun', 'WPBakery Page Builder'], ['sliders', 'Settings'], null,
  ['layers', 'LayerSlider'], ['update', 'Slider Revolution'], ['leaf', 'Envato Market'], ['shield', 'Ultimate'],
];

const range = (n) => Array.from({ length: n }, (_, i) => i);

export default function App() {
  return (
    <Screen>
      <GlobalStyle />
      <BookmarkBar>
        {bookmarks.map(([icon, name, width]) => (
          <Bookmark key={name} href="#" $width={width}>
            <svg width="16" height="16" viewBox="0 0 16 16" aria-hidden="true">{favicons[icon]}</svg>
            {name}
          </Bookmark>
        ))}
        <AllBookmarks href="#"><Icon name="folder" size={17} />All Bookmarks</AllBookmarks>
      </BookmarkBar>

      <Window>
        <Page>
          <AdminBar>
            <AdminItem href="#" $width={37} aria-label="WordPress"><FaWordpress size={20} /></AdminItem>
            <AdminItem href="#" $width={63}><Icon name="home" size={18} />Tanj</AdminItem>
            <AdminItem href="#" $width={56}><Icon name="update" />10</AdminItem>
            <AdminItem href="#" $width={48} $dim><Icon name="comment" size={18} />0</AdminItem>
            <AdminItem href="#" $width={65}><Icon name="thickPlus" size={18} />New</AdminItem>
            <AdminItem href="#" $width={73}>View Page</AdminItem>
            <AdminItem href="#" $width={80}><Icon name="ticket" size={18} />Events</AdminItem>
            <Account href="#">
              Howdy, admin
              <svg width="18" height="18" viewBox="0 0 18 18" aria-hidden="true">
                <rect x=".5" y=".5" width="17" height="17" fill="#c5c5c5" stroke="#8c8f94" />
                <path fill="#fff" d="M9 3c2 0 3.400 1.500 3.400 3.500 0 1.300-.6 2.500-1.400 3.200 2.500.8 4 2.300 4 4.300v3H3v-3c0-2 1.500-3.500 4-4.300a4.300 4.300 0 0 1-1.400-3.200C5.600 4.500 7 3 9 3z" />
              </svg>
            </Account>
          </AdminBar>

          <Columns>
            <Menu>
              <MenuItem href="#"><Icon name="media" />Media</MenuItem>
              <MenuItem href="#" $active><Icon name="pages" />Pages</MenuItem>
              <SubMenu>
                <SubLink href="#" $current>All Pages</SubLink>
                <SubLink href="#">Add New</SubLink>
              </SubMenu>
              {menuItems.map((item, i) => (item ? (
                <MenuItem href="#" key={item[1]}>
                  {item[0] === 'woo' ? <WooBadge aria-hidden="true">Woo</WooBadge> : <Icon name={item[0]} />}
                  {item[1]}
                  {item[2] && <Count>{item[2]}</Count>}
                </MenuItem>
              ) : <MenuGap key={i} />))}
              <MenuItem href="#" $dim><Icon name="collapse" />Collapse menu</MenuItem>
            </Menu>

            <Main>
              <Toolbar>
                <ToolGroup>
                  <ToolButton aria-label="WPBakery"><Icon name="bun" size={26} width={32} /></ToolButton>
                  <ToolButton aria-label="Add element"><Icon name="plus" size={25} /></ToolButton>
                  <ToolButton aria-label="Templates"><Icon name="templates" size={25} /></ToolButton>
                </ToolGroup>
                <ToolGroup>
                  <ToolButton aria-label="Undo"><Icon name="undo" size={27} /></ToolButton>
                  <ToolButton aria-label="Redo" disabled><Icon name="redo" size={27} /></ToolButton>
                  <ToolButton aria-label="Full screen"><Icon name="fullscreen" size={25} /></ToolButton>
                  <ToolButton aria-label="Page settings"><Icon name="gear" size={26} /></ToolButton>
                  <Actions>
                    <ActionButton $dark>Preview</ActionButton>
                    <ActionButton>Update</ActionButton>
                  </Actions>
                </ToolGroup>
              </Toolbar>

              <Workspace>
                <Editor>
                  <Rows>
                    <Grid $columns="884fr 427fr">
                      <Shade $pad="0 14px 25px">
                        <Grid $columns="1fr 1fr">
                          <IconBoxCard type={2} />
                          <IconBoxCard type={2} />
                        </Grid>
                      </Shade>
                    </Grid>

                    <RowNote>Background Style: Image / Parallax</RowNote>
                    <RowControls layout="rows1" highlighted />
                    <Shade>
                      <Stack>
                        <Card $pad="11px 11px 12px"><Element art={<HeadingArt />} title="Simple Heading" info="Type: Two Colored Title" /></Card>
                        <Card $pad="11px 11px 12px"><Element art={<DividerArt />} title="Horizontal Custom" /></Card>
                        <Card $pad="11px 11px 12px"><Element art={<LetterTile>a</LetterTile>} title="Custom Heading" info="Text: Could you be mine. And when the odds are" /></Card>
                        <div>
                          <RowControls layout="rows6" />
                          <Grid $columns="repeat(6, 1fr)">
                            {range(6).map((i) => <IconBoxCard key={i} type={5} tools />)}
                          </Grid>
                        </div>
                      </Stack>
                    </Shade>

                    <RowControls layout="rows3" top={15} />
                    <Grid $columns="313fr 655fr 313fr">
                      <EmptyColumn />
                      <Shade>
                        <RowControls layout="rows1" />
                        <IconBoxCard type={5} tools />
                      </Shade>
                      <EmptyColumn />
                    </Grid>
                    <AddButton aria-label="Add row"><Icon name="add" size={14} /></AddButton>
                  </Rows>
                  <NextRows>
                    <RowControls layout="rows1" />
                  </NextRows>
                </Editor>

                <Aside>
                  <MetaBox $cut>Select custom footer for this page.</MetaBox>

                  <MetaBox>
                    <MetaHeader title="Publish" />
                    <MetaBody $pad="10px 10px 2px">
                      <Button>Preview Changes</Button>
                      <MetaBody $pad="4px 0 0">
                        <StatusRow><Icon name="pin" size={17} /><span>Status: <Strong>Published</Strong> <Link href="#">Edit</Link></span></StatusRow>
                        <StatusRow><Icon name="eye" size={17} /><span>Visibility: <Strong>Public</Strong> <Link href="#">Edit</Link></span></StatusRow>
                        <StatusRow><Icon name="calendar" size={17} /><span>Published on: <Strong>Jan 18, 2018 at 05:45</Strong> <Link href="#">Edit</Link></span></StatusRow>
                      </MetaBody>
                    </MetaBody>
                    <PublishFoot>
                      <Link href="#" $danger>Move to Trash</Link>
                      <Button $primary>Update</Button>
                    </PublishFoot>
                  </MetaBox>

                  <MetaBox>
                    <MetaHeader title="Page Attributes" />
                    <Form>
                      <Field><FieldLabel htmlFor="parent">Parent</FieldLabel><Select id="parent" value="(no parent)" width={188} /></Field>
                      <Field><FieldLabel htmlFor="template">Template</FieldLabel><Select id="template" value="Default template" width={237} /></Field>
                      <Field><FieldLabel htmlFor="order">Order</FieldLabel><TextInput id="order" defaultValue="0" /></Field>
                      <p>Need help? Use the Help tab above the screen title.</p>
                    </Form>
                  </MetaBox>

                  <MetaBox>
                    <MetaHeader title="Slider Revolution" />
                    <MetaBody $pad="1px 12px 0">
                      <SliderRow>
                        <span>Blank Template</span>
                        <Switch>OFF<SwitchKnob type="checkbox" aria-label="Blank Template" /></Switch>
                      </SliderRow>
                      <SliderRow>
                        <label htmlFor="slide">Slide Template</label>
                        <Select id="slide" value="default" width={78} />
                      </SliderRow>
                      <Version>
                        <svg width="15" height="20" viewBox="0 0 15 20" aria-hidden="true"><path fill="#5e35b1" fillRule="evenodd" d="M0 0h8l2 2h5v18H0zM2 10v5h5v-5z" /></svg>
                        Installed Version
                      </Version>
                    </MetaBody>
                  </MetaBox>
                </Aside>
              </Workspace>
              <RowSettings />
            </Main>
          </Columns>
        </Page>
        <Scrollbar $width={16}>
          <Icon name="scrollUp" size={11} />
          <Thumb $top={111} $height={64} />
          <Icon name="scrollDown" size={11} />
        </Scrollbar>
      </Window>
      <Taskbar>
        <TaskSearch><TaskArt $width={16} /><TaskArt $width={30} /></TaskSearch>
        <TaskActive />
      </Taskbar>
    </Screen>
  );
}
